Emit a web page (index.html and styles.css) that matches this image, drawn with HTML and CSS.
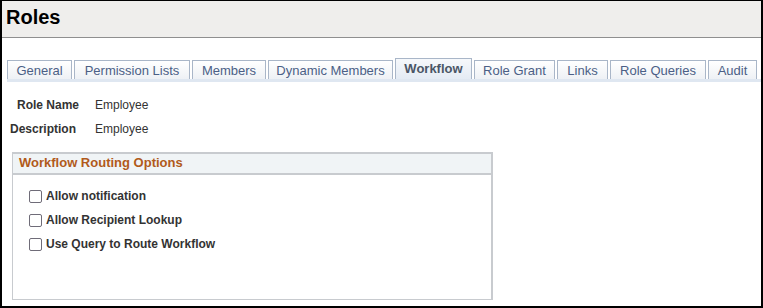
FILE: index.html
```html
<!DOCTYPE html>
<html>
<head>
<meta charset="utf-8">
<link rel="stylesheet" href="styles.css">
</head>
<body>
<div class="frame">
  <div class="header"><h1 class="title">Roles</h1></div>
  <div class="tabs">
    <div class="tab">General</div>
    <div class="tab">Permission Lists</div>
    <div class="tab">Members</div>
    <div class="tab">Dynamic Members</div>
    <div class="tab active">Workflow</div>
    <div class="tab">Role Grant</div>
    <div class="tab">Links</div>
    <div class="tab">Role Queries</div>
    <div class="tab">Audit</div>
  </div>
  <div class="tabline"></div>
  <div class="fields">
    <div class="field"><span class="label l1">Role Name</span><span class="value">Employee</span></div>
    <div class="field"><span class="label l2">Description</span><span class="value">Employee</span></div>
  </div>
  <div class="group">
    <div class="group-head">Workflow Routing Options</div>
    <div class="group-body">
      <label class="check"><span class="box"></span>Allow notification</label>
      <label class="check"><span class="box"></span>Allow Recipient Lookup</label>
      <label class="check"><span class="box"></span>Use Query to Route Workflow</label>
    </div>
  </div>
</div>
</body>
</html>
```
FILE: styles.css
```css
html, body { margin: 0; padding: 0; background: #fff; }
body { font-family: "Liberation Sans", Arial, sans-serif; }
.frame {
  width: 763px; height: 308px; box-sizing: border-box;
  border-top: 1px solid #000; border-left: 2px solid #000;
  border-right: 2px solid #000; border-bottom: 2px solid #000;
  overflow: hidden;
}
.header {
  height: 36px; background: #efeeec; border-bottom: 1px solid #8f8f8f;
  display: flex; align-items: center; padding-left: 4px;
}
.title { margin: 0 0 5px 0; font-size: 20px; font-weight: bold; color: #000; line-height: 20px; }
.tabs { display: flex; gap: 2px; margin-top: 20px; padding-left: 5px; align-items: flex-end; }
.tab {
  height: 19px; box-sizing: border-box; border: 1px solid #a9b6c8; border-bottom: none;
  background: linear-gradient(#ffffff, #eef1f5);
  font-size: 13px; color: #4b5f86; line-height: 19px; text-align: center;
}
.tab:nth-child(1) { width: 65px; }
.tab:nth-child(2) { width: 116px; }
.tab:nth-child(3) { width: 74px; }
.tab:nth-child(4) { width: 125px; }
.tab:nth-child(5) { width: 77px; }
.tab:nth-child(6) { width: 81px; }
.tab:nth-child(7) { width: 51px; }
.tab:nth-child(8) { width: 96px; }
.tab:nth-child(9) { width: 49px; }
.tab.active {
  height: 21px; font-weight: bold; color: #4a5566;
  background: linear-gradient(#f6f8fb, #e4ebf4);
}
.tabline { height: 3px; margin-left: 5px; background: #dfe7f1; }
.fields { padding-top: 11px; }
.field { display: flex; height: 24px; align-items: center; font-size: 12px; color: #333; }
.label { font-weight: bold; text-align: right; }
.l1 { width: 77px; }
.l2 { width: 74px; }
.value { margin-left: 16px; }
.l2 + .value { margin-left: 19px; }
.group {
  margin: 11px 0 0 10px; width: 481px; height: 148px; box-sizing: border-box;
  border: 1px solid #c8cbcf; border-top: 2px solid #c8cbcf; border-right: 2px solid #c8cbcf;
}
.group-head {
  height: 19px; background: #f0f4f6; border-bottom: 2px solid #c8cbcf;
  font-size: 13px; font-weight: bold; color: #b15a1b; line-height: 18px; padding-left: 6px;
}
.group-body { padding: 9px 0 0 16px; display: flex; flex-direction: column; }
.check {
  display: flex; align-items: center; height: 24px; font-size: 12px; font-weight: bold; color: #333;
}
.box {
  width: 11px; height: 11px; border: 1px solid #6f6c78; border-radius: 2px; margin-right: 4px;
  background: #fff;
}
```
